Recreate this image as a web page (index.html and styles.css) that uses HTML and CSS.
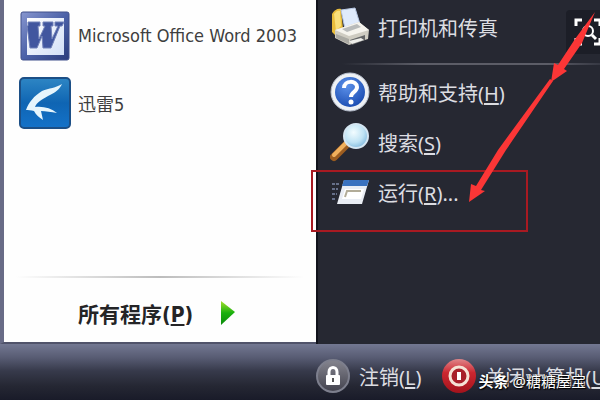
FILE: index.html
```html
<!DOCTYPE html>
<html lang="zh-CN">
<head>
  <meta charset="UTF-8">
  <title>开始菜单</title>
  <link rel="stylesheet" href="styles.css">
</head>
<body>

<main class="menu">
  <div class="panes">
    <nav class="programs">
      <a class="program" href="#word">
        <svg class="icon" viewBox="0 0 52 52" aria-hidden="true">
          <defs>
            <linearGradient id="wordFrame" x1="0" y1="0" x2="1" y2="1">
              <stop offset="0" stop-color="#8796cf"/>
              <stop offset="0.5" stop-color="#4c62a8"/>
              <stop offset="1" stop-color="#2c3d7c"/>
            </linearGradient>
            <linearGradient id="wordPaper" x1="0" y1="0" x2="1" y2="1">
              <stop offset="0" stop-color="#ffffff"/>
              <stop offset="1" stop-color="#d3e0f7"/>
            </linearGradient>
          </defs>
          <rect x="2" y="2" width="48" height="48" rx="2" fill="url(#wordFrame)" stroke="#40508c"/>
          <rect x="8" y="8" width="37" height="37" fill="url(#wordPaper)"/>
          <path d="M9 12h12v4h-2l1 13 6-13h-2v-4h10v4h-2l1 13 6-13h-3v-4h9l-2 4h-2l-9 22h-8l-1-12-5 12h-7l-3-22H9z" fill="#41569f" stroke="#7181b8"/>
        </svg>
        <span>Microsoft Office Word 2003</span>
      </a>
      <a class="program" href="#thunder">
        <svg class="icon" viewBox="0 0 52 52" aria-hidden="true">
          <defs>
            <linearGradient id="thunder" x1="0" y1="0" x2="0" y2="1">
              <stop offset="0" stop-color="#2e86c4"/>
              <stop offset="0.5" stop-color="#0f65b3"/>
              <stop offset="1" stop-color="#1472c9"/>
            </linearGradient>
          </defs>
          <rect x="1" y="1" width="50" height="50" rx="4" fill="url(#thunder)" stroke="#1c4f86" stroke-width="2"/>
          <path d="M43 7c-2 5-7 9-14 12-7 4-11 6-13 11 8-1 16 1 22 6-6-1-11-2-16-2l2 9c-4-3-7-5-9-9-3-1-6-1-8-1 3-8 8-14 16-19 7-3 14-3 20-7z" fill="#e6f5fc"/>
        </svg>
        <span>迅雷5</span>
      </a>
      <hr class="fade-line">
      <a class="all-programs" href="#all">
        <span>所有程序(<u>P</u>)</span>
        <svg class="play" viewBox="0 0 16 24" aria-hidden="true">
          <defs>
            <linearGradient id="play" x1="0" y1="0" x2="0" y2="1">
              <stop offset="0" stop-color="#a4e02c"/>
              <stop offset="0.5" stop-color="#19b00e"/>
              <stop offset="1" stop-color="#0b8a0b"/>
            </linearGradient>
          </defs>
          <path d="M1 0l14 11L1 24z" fill="url(#play)"/>
        </svg>
      </a>
    </nav>

    <nav class="places">
      <a class="place" href="#printers">
        <svg class="place-icon" viewBox="0 0 40 40" aria-hidden="true">
          <path d="M2 7c2-4 6-6 9-5l2 20-8 6-3-3z" fill="#e9bd3c"/>
          <path d="M4 7c2-3 4-4 6-3l1 15-5 5z" fill="#f9df7a"/>
          <path d="M11 3l14-2 5 16-15 5z" fill="#e0ebfc" stroke="#b8c8e4"/>
          <path d="M5 23l24-8 10 8-1 9-19 6L5 31z" fill="#cfccc2"/>
          <path d="M5 23l24-8 10 8-20 6z" fill="#f6f4ee"/>
          <path d="M12 22l15-5 4 3-14 5z" fill="#b9bbbb"/>
          <path d="M20 33l15-5v5l-13 5z" fill="#636466"/>
          <path d="M19 34l12-3 3 2-12 4z" fill="#eeeeea"/>
          <path d="M6 27l13 5v5L6 31z" fill="#aaa9a3"/>
        </svg>
        <span>打印机和传真</span>
      </a>
      <hr class="place-line">
      <a class="place" href="#help">
        <svg class="place-icon" viewBox="0 0 40 40" aria-hidden="true">
          <defs>
            <radialGradient id="help" cx="0.4" cy="0.3" r="0.8">
              <stop offset="0" stop-color="#5c91ea"/>
              <stop offset="1" stop-color="#1647ad"/>
            </radialGradient>
          </defs>
          <circle cx="20" cy="20" r="19" fill="#eef1f5" stroke="#b8c0cf"/>
          <circle cx="20" cy="20" r="15" fill="url(#help)"/>
          <path d="M14 16c0-8 13-8 13-1 0 5-6 5-6 10" fill="none" stroke="#fff" stroke-width="4"/>
          <circle cx="21" cy="30" r="2.5" fill="#fff"/>
        </svg>
        <span>帮助和支持(<u>H</u>)</span>
      </a>
      <a class="place" href="#search">
        <svg class="place-icon" viewBox="0 0 40 40" aria-hidden="true">
          <defs>
            <radialGradient id="lens" cx="0.4" cy="0.35" r="0.7">
              <stop offset="0" stop-color="#f2fcff"/>
              <stop offset="0.6" stop-color="#bfe3f4"/>
              <stop offset="1" stop-color="#7db6dc"/>
            </radialGradient>
          </defs>
          <path d="M4 35l13-13" stroke="#9c5d20" stroke-width="8" stroke-linecap="round"/>
          <path d="M4 33l12-12" stroke="#f0b05c" stroke-width="4" stroke-linecap="round"/>
          <circle cx="26" cy="14" r="12" fill="url(#lens)" stroke="#d5e6f2" stroke-width="2"/>
        </svg>
        <span>搜索(<u>S</u>)</span>
      </a>
      <a class="place" href="#run">
        <svg class="place-icon" viewBox="0 0 40 40" aria-hidden="true">
          <path d="M2 12h7M2 17h6M2 22h5M2 27h4" stroke="#66708a" stroke-width="2" stroke-dasharray="3 1"/>
          <path d="M14 8h25l-7 24H7z" fill="#e9edf4"/>
          <path d="M14 8h25l-2 6H12z" fill="#3a72bf"/>
          <path d="M15 17h19l-3 10H12z" fill="#fff"/>
          <path d="M15 25l2-6h14" fill="none" stroke="#b2ac98" stroke-width="2"/>
        </svg>
        <span>运行(<u>R</u>)...</span>
      </a>
    </nav>
  </div>

  <footer class="bottom-bar">
    <button class="power" type="button">
      <svg class="power-icon" viewBox="0 0 36 36" aria-hidden="true">
        <defs>
          <linearGradient id="lock" x1="0" y1="0" x2="0" y2="1">
            <stop offset="0" stop-color="#85858f"/>
            <stop offset="1" stop-color="#42424d"/>
          </linearGradient>
        </defs>
        <circle cx="18" cy="18" r="16" fill="url(#lock)" stroke="#7d7f8d" stroke-width="2"/>
        <path d="M14 17v-3c0-6 8-6 8 0v3" fill="none" stroke="#fff" stroke-width="3"/>
        <rect x="11" y="17" width="14" height="10" rx="1" fill="#fff"/>
        <path d="M18 20v4" stroke="#555" stroke-width="2"/>
      </svg>
      <span>注销(<u>L</u>)</span>
    </button>
    <button class="power" type="button">
      <svg class="power-icon" viewBox="0 0 36 36" aria-hidden="true">
        <defs>
          <linearGradient id="off" x1="0" y1="0" x2="0" y2="1">
            <stop offset="0" stop-color="#e0868a"/>
            <stop offset="0.4" stop-color="#cc2730"/>
            <stop offset="1" stop-color="#a3131c"/>
          </linearGradient>
        </defs>
        <circle cx="18" cy="18" r="17" fill="url(#off)"/>
        <circle cx="18" cy="18" r="9" fill="#a8202a" stroke="#f5e3d6" stroke-width="3"/>
        <path d="M18 14v8" stroke="#fff" stroke-width="4"/>
      </svg>
      <span>关闭计算机(<u>U</u>)</span>
    </button>
  </footer>

  <!-- marks drawn over the menu -->
  <div class="run-frame"></div>
  <button class="scan" type="button" aria-label="搜索图片">
    <svg viewBox="0 0 28 28" aria-hidden="true">
      <path d="M2 8V2h6M20 2h6v6M26 20v6h-6M8 26H2v-6" fill="none" stroke="#fff" stroke-width="3"/>
      <circle cx="14" cy="13" r="5" fill="none" stroke="#fff" stroke-width="2"/>
      <path d="M18 17l4 4" stroke="#fff" stroke-width="3"/>
    </svg>
  </button>
  <svg class="arrows" viewBox="0 0 600 400" aria-hidden="true">
    <path d="M595 12L582 43L564 69L567 71L551 82L554 63L558 65L575 39z" fill="#fb3636"/>
    <path d="M550 79L553 81L506 150L481 190L485 191L469 202L471 184L476 186L498 150z" fill="#fb3636"/>
  </svg>
  <p class="credit"><b>头条</b> @糖糖屋宝</p>
</main>

</body>
</html>
```

FILE: styles.css
```css
body {
  margin: 0;
  font-family: "DejaVu Sans Condensed", "Noto Sans CJK SC", sans-serif;
  font-size: 20px;
  background: #262832;
}

.menu {
  position: relative;
  display: flex;
  flex-direction: column;
  min-height: 100vh;
  overflow: hidden;
}

.panes {
  flex: 1;
  display: grid;
  grid-template-columns: 79fr 71fr;
  background: #262832;
}

.programs {
  display: flex;
  flex-direction: column;
  padding-top: 2px;
  background: #fefefe;
  border-left: 4px solid #686b86;
  border-bottom: 2px solid #50536a;
}

.program {
  display: flex;
  align-items: center;
  gap: 7px;
  height: 67px;
  padding-left: 15px;
  color: #3e3e40;
  font-size: 18px;
  text-decoration: none;
  white-space: nowrap;
}

.icon {
  width: 52px;
  height: 52px;
}

.fade-line {
  width: 92%;
  height: 2px;
  margin: auto auto 0;
  border: 0;
  background: linear-gradient(90deg, transparent, #bcbcbc 50%, transparent);
}

.all-programs {
  display: flex;
  align-items: center;
  gap: 27px;
  height: 64px;
  padding: 5px 0 0 74px;
  box-sizing: border-box;
  color: #242426;
  font-size: 21px;
  font-weight: bold;
  text-decoration: none;
}

.play {
  width: 16px;
  height: 24px;
}

u {
  text-underline-offset: 2px;
}

.places {
  padding-top: 2px;
  border-left: 2px solid #11131c;
}

.place {
  display: flex;
  align-items: center;
  gap: 8px;
  height: 50px;
  padding-left: 12px;
  color: #dcdde2;
  font-family: "Noto Sans", "Noto Sans CJK SC", sans-serif;
  text-decoration: none;
  white-space: nowrap;
}

.place-icon {
  width: 40px;
  height: 40px;
}

.place-line {
  height: 2px;
  margin: 11px 0 2px 24px;
  border: 0;
  background: linear-gradient(90deg, transparent, #5c5d67 30%, #5c5d67 80%, #363843);
}

.bottom-bar {
  display: flex;
  justify-content: flex-end;
  align-items: center;
  gap: 20px;
  height: 56px;
  padding-top: 8px;
  box-sizing: border-box;
  background: linear-gradient(#737892, #575b72 25%, #373a4b 48%, #252733 75%, #191b29);
}

.power {
  display: flex;
  align-items: center;
  gap: 8px;
  padding: 0;
  border: 0;
  background: none;
  color: #dcdde2;
  font-family: "Noto Sans", "Noto Sans CJK SC", sans-serif;
  font-size: 20px;
  white-space: nowrap;
}

.power-icon {
  width: 36px;
  height: 36px;
}

.power:last-child {
  margin-right: -12px;
}

.run-frame {
  position: absolute;
  top: 170px;
  left: 311px;
  width: 213px;
  height: 58px;
  border: 2px solid #a81a22;
}

.scan {
  position: absolute;
  top: 10px;
  right: -6px;
  width: 40px;
  height: 44px;
  padding: 8px 4px 8px 8px;
  border: 0;
  border-radius: 4px 0 0 4px;
  background: #1c1e27;
}

.scan svg {
  display: block;
  width: 28px;
  height: 28px;
}

.arrows {
  position: absolute;
  top: 0;
  left: 0;
  width: 600px;
  height: 400px;
  pointer-events: none;
}

.credit {
  position: absolute;
  right: 14px;
  bottom: 8px;
  margin: 0;
  color: #fff;
  font-family: "Noto Sans", "Noto Sans CJK SC", sans-serif;
  font-size: 15px;
  line-height: 22px;
  text-shadow: 0 0 2px #000, 1px 1px 1px #000;
}
```
